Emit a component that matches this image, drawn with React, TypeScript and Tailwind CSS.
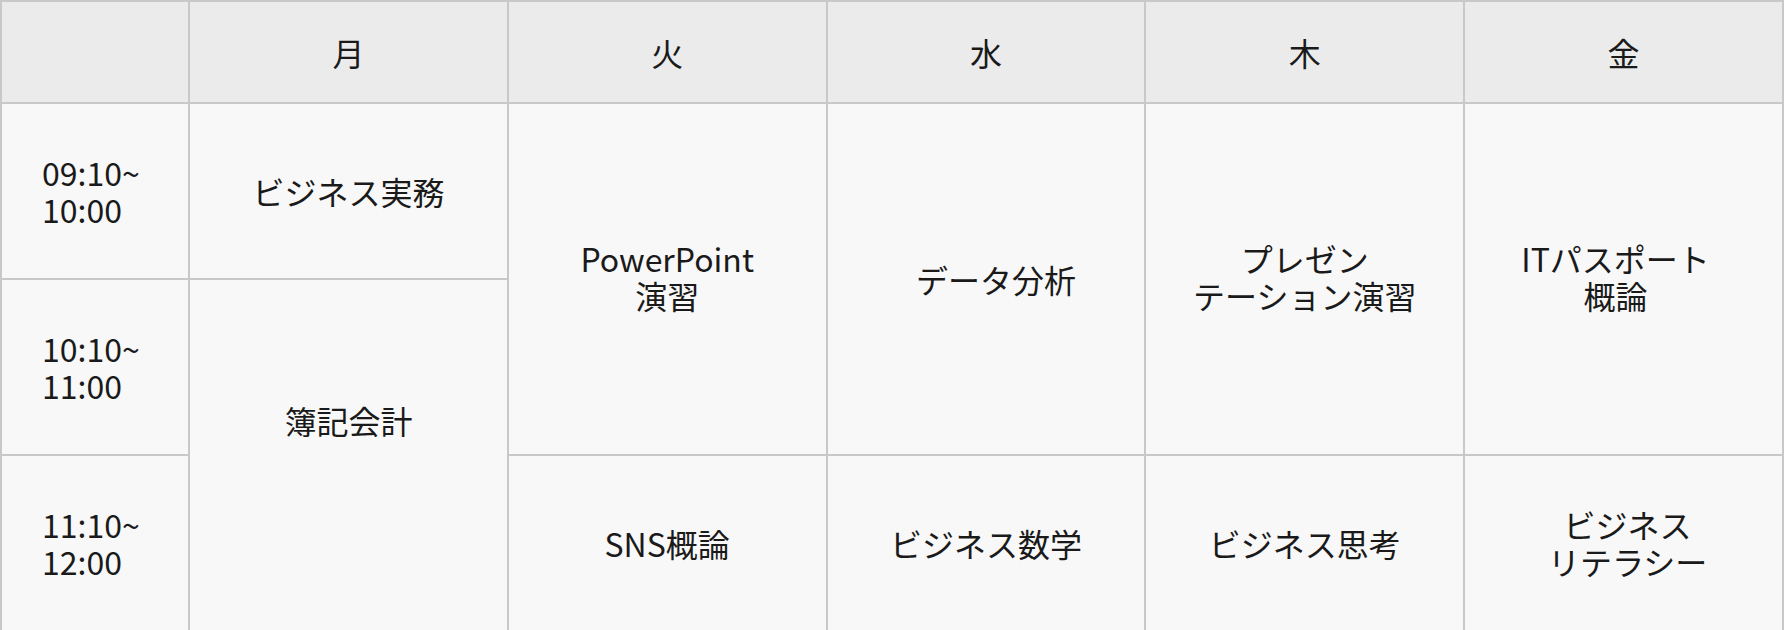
import React from "react";

const days = ["月", "火", "水", "木", "金"];

const cell = "border-2 border-[#c8c8c8] text-center align-middle";

export default function App() {
  return (
    <div className="w-[1784px] h-[630px] bg-white">
      <table
        className="w-[1784px] h-[630px] table-fixed border-collapse text-[32px] leading-[1.15] font-normal text-[#1a1a1a]"
        style={{ fontFamily: '"Noto Sans CJK JP", "Noto Sans", sans-serif' }}
      >
        <colgroup>
          <col className="w-[188px]" />
          <col />
          <col />
          <col />
          <col />
          <col />
        </colgroup>
        <thead>
          <tr className="h-[102px] bg-[#ebebeb]">
            <th className={`${cell} font-normal`}></th>
            {days.map((d) => (
              <th key={d} className={`${cell} font-normal`}>
                {d}
              </th>
            ))}
          </tr>
        </thead>
        <tbody className="bg-[#f8f8f8]">
          <tr className="h-[176px]">
            <td className={`${cell} !text-left pl-10`}>
              09:10~
              <br />
              10:00
            </td>
            <td className={cell}>ビジネス実務</td>
            <td className={`${cell} pb-1`} rowSpan={2}>
              PowerPoint
              <br />
              演習
            </td>
            <td className={`${cell} pl-5`} rowSpan={2}>
              データ分析
            </td>
            <td className={`${cell} pb-1`} rowSpan={2}>
              プレゼン
              <br />
              テーション演習
            </td>
            <td className={`${cell} pr-4 pb-1`} rowSpan={2}>
              ITパスポート
              <br />
              概論
            </td>
          </tr>
          <tr className="h-[176px]">
            <td className={`${cell} !text-left pl-10`}>
              10:10~
              <br />
              11:00
            </td>
            <td className={`${cell} pb-[70px]`} rowSpan={2}>
              簿記会計
            </td>
          </tr>
          <tr className="h-[176px]">
            <td className={`${cell} !text-left pl-10`}>
              11:10~
              <br />
              12:00
            </td>
            <td className={cell}>SNS概論</td>
            <td className={cell}>ビジネス数学</td>
            <td className={cell}>ビジネス思考</td>
            <td className={`${cell} pl-2`}>
              ビジネス
              <br />
              リテラシー
            </td>
          </tr>
        </tbody>
      </table>
    </div>
  );
}
